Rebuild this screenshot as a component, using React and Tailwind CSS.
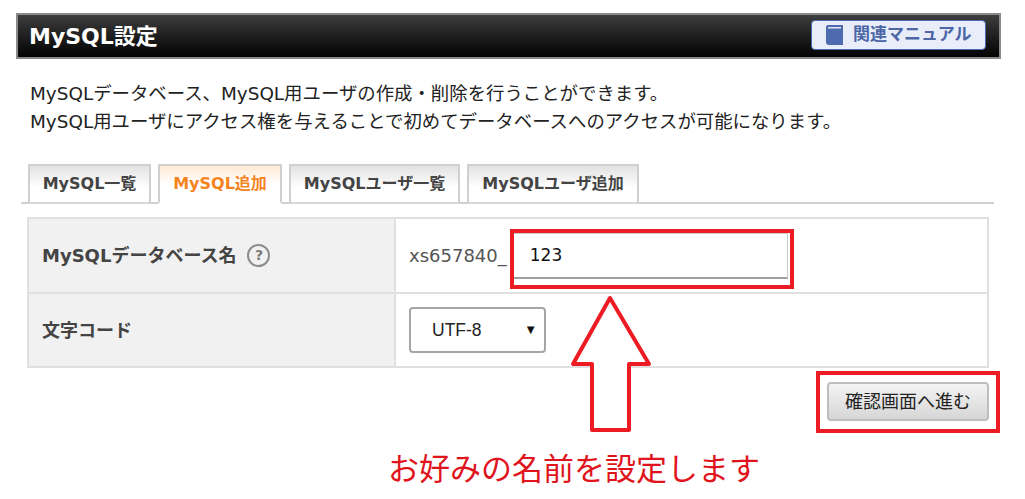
import React from "react";

function Tab({ label, active, width }) {
  return (
    <div
      className={`${width} h-[40px] -mb-[2px] border-2 border-[#d0d0d0] flex items-center justify-center text-[16px] font-bold ${
        active
          ? "border-b-white bg-gradient-to-b from-[#ffe9d2] to-white to-50% text-[#f5841f] z-10"
          : "border-b-[#d8d8d8] bg-gradient-to-b from-[#e2e2e2] to-white to-60% text-[#444444]"
      }`}
    >
      {label}
    </div>
  );
}

export default function App() {
  return (
    <div className="relative w-[1025px] h-[499px] overflow-hidden bg-white pt-[13px] pl-4 text-[#333333] font-['DejaVu_Sans','Noto_Sans_CJK_JP',sans-serif]">
      {/* Title bar */}
      <div className="w-[985px] h-[46px] border-2 border-[#8a8a8a] bg-gradient-to-b from-[#3e3e3e] to-[#050505] flex items-center justify-between pl-[11px] pr-[13px]">
        <h1 className="text-[22px] font-bold text-white">MySQL設定</h1>
        <div className="w-[175px] h-[30px] -mt-[3px] rounded-sm border border-[#4a69b0] bg-[#e8edf9] flex items-center pl-[14px] gap-[10px] text-[17px] font-bold text-[#4c66a6]">
          <svg width="17" height="20" viewBox="0 0 17 20">
            <path d="M2 0h15v20H3a3 3 0 0 1-3-3V2a2 2 0 0 1 2-2z" fill="#4f6bb0" />
            <path d="M2 2h13v1.5H2z" fill="#dfe5f5" />
          </svg>
          <span>関連マニュアル</span>
        </div>
      </div>

      {/* Description */}
      <div className="mt-[21px] pl-[14px] text-[18.4px] leading-[28px] text-[#222222]">
        <p>MySQLデータベース、MySQL用ユーザの作成・削除を行うことができます。</p>
        <p>MySQL用ユーザにアクセス権を与えることで初めてデータベースへのアクセスが可能になります。</p>
      </div>

      {/* Tabs */}
      <div className="mt-[28px] ml-[5px] w-[973px] pl-[7px] flex gap-[7px] border-b-2 border-[#d0d0d0]">
        <Tab label="MySQL一覧" width="w-[123px]" />
        <Tab label="MySQL追加" active width="w-[124px]" />
        <Tab label="MySQLユーザ一覧" width="w-[171px]" />
        <Tab label="MySQLユーザ追加" width="w-[172px]" />
      </div>

      {/* Form table */}
      <div className="mt-[13px] ml-[11px] w-[962px] border-2 border-[#e0e0e0] text-[#444444]">
        <div className="flex h-[75px] border-b-2 border-[#e0e0e0]">
          <div className="w-[367px] shrink-0 bg-[#f1f1f1] border-r-2 border-[#e0e0e0] pl-[13px] flex items-center gap-[11px] text-[18px] font-bold">
            <span>MySQLデータベース名</span>
            <span className="w-[23px] h-[23px] rounded-full border-2 border-[#8c8c8c] flex items-center justify-center text-[14px] text-[#777777]">?</span>
          </div>
          <div className="flex items-center pl-[13px] text-[18px] text-[#555555]">
            <span>xs657840_</span>
            <div className="w-[277px] h-[46px] mt-[1px] ml-[4px] border border-[#c4ccd0] border-b-2 border-b-[#a0a0a0] pl-[18px] flex items-center text-[17px] text-[#111111]">123</div>
          </div>
        </div>
        <div className="flex h-[72px]">
          <div className="w-[367px] shrink-0 bg-[#f1f1f1] border-r-2 border-[#e0e0e0] pl-[13px] flex items-center text-[18px] font-bold">
            文字コード
          </div>
          <div className="flex items-center pl-[13px]">
            <div className="w-[137px] h-[46px] rounded-sm border-2 border-[#a5a5a5] flex items-center justify-between pl-[21px] pr-[7px] text-[17.5px] text-[#222222] font-['Liberation_Sans',sans-serif]">
              <span>UTF-8</span>
              <span className="text-[13px] text-[#111111]">▼</span>
            </div>
          </div>
        </div>
      </div>

      {/* Submit */}
      <div className="mt-[14px] w-[973px] flex justify-end">
        <div className="w-[162px] h-[39px] rounded-sm border-2 border-[#bdbdbd] bg-gradient-to-b from-[#f4f4f4] to-[#d6d6d6] flex items-center justify-center text-[18px] text-[#222222]">
          確認画面へ進む
        </div>
      </div>

      {/* Red annotations */}
      <div className="absolute left-[510px] top-[229px] w-[284px] h-[60px] border-4 border-[#ed1c24]" />
      <div className="absolute left-[816px] top-[371px] w-[184px] h-[62px] border-4 border-[#ed1c24]" />
      <svg className="absolute left-[570px] top-[295px]" width="84" height="140" viewBox="0 0 84 140">
        <path d="M40 3 L3 69 H22 V135 H59 V69 H79 Z" fill="white" stroke="#ed1c24" strokeWidth="4" strokeLinejoin="round" />
      </svg>
      <div className="absolute left-[388px] top-[445px] text-[31px] leading-[44px] text-[#e0141c] font-['Noto_Sans_CJK_JP',sans-serif]">
        お好みの名前を設定します
      </div>
    </div>
  );
}
